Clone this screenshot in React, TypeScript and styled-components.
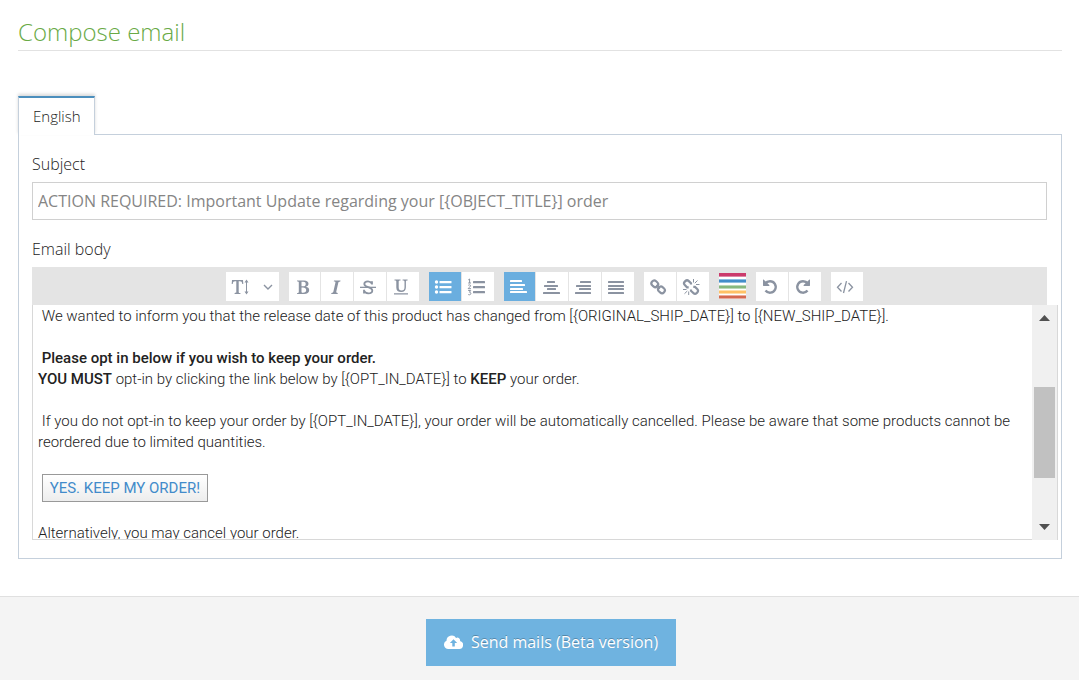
import React, { ReactNode } from "react";
import styled, { createGlobalStyle } from "styled-components";

const GlobalStyle = createGlobalStyle`
  *, *::before, *::after { box-sizing: border-box; }
  body {
    margin: 0;
    background: #fff;
    color: #393939;
    font: 300 16px/24px "Open Sans", sans-serif;
  }
  button, input { font: inherit; color: inherit; margin: 0; }
`;

const Page = styled.div`
  display: flex;
  flex-direction: column;
  min-height: 100vh;
`;

const Main = styled.main`
  padding: 14px 17px 37px 18px;
`;

const Title = styled.h1`
  margin: 0 0 45px;
  padding-bottom: 0;
  border-bottom: 1px solid #e2e2e2;
  color: #69aa46;
  font-size: 24px;
  font-weight: 300;
  line-height: 36px;
`;

const Tabs = styled.div`
  display: flex;
  position: relative;
  margin-bottom: -1px;
`;

const Tab = styled.button`
  height: 39px;
  padding: 0 13px 2px 14px;
  border: 1px solid #c5d0dc;
  border-top: 2px solid #4c8fbd;
  border-bottom: 0;
  background: #fff;
  box-shadow: 0 -2px 3px rgba(0, 0, 0, 0.15);
  color: #222;
  font-size: 15px;
`;

const Panel = styled.form`
  padding: 17px 14px 18px 13px;
  border: 1px solid #c5d0dc;
`;

const Label = styled.label`
  display: block;
  margin-bottom: 6px;
  color: #222;
`;

const SubjectInput = styled.input`
  display: block;
  width: 100%;
  height: 38px;
  margin-bottom: 17px;
  padding: 0 5px;
  border: 1px solid #d0d0d0;
  border-radius: 0;
  outline: 0;
  background: #fff;
  color: #858585;
  font-weight: 400;
`;

const Toolbar = styled.div`
  display: flex;
  justify-content: center;
  gap: 10px;
  height: 38px;
  padding: 5px 0 4px 9px;
  background: #e4e4e4;
`;

const Group = styled.div<{ $width: number }>`
  display: flex;
  gap: 1px;
  width: ${(p) => p.$width}px;
`;

const ToolButton = styled.button<{ $active?: boolean; $menu?: boolean }>`
  display: flex;
  flex: 1;
  align-items: center;
  justify-content: center;
  gap: 14px;
  padding: 0 ${(p) => (p.$menu ? 0 : 3)}px 0 0;
  border: 0;
  background: ${(p) => (p.$active ? "#6aaedf" : "#fff")};
  color: ${(p) => (p.$active ? "#fff" : "#8b93a1")};
`;

const ColorButton = styled.button`
  display: flex;
  width: 27px;
  padding: 1px 0 0;
  border: 0;
  background: transparent;
`;

const Editor = styled.div`
  display: flex;
  height: 235px;
  margin-right: -11px;
  border-right: 1px solid #d8d8d8;
  border-left: 1px solid #d8d8d8;
`;

const EditorText = styled.div`
  flex: 1;
  overflow: hidden;
  padding: 1px 5px 0;
  border-bottom: 1px solid #d8d8d8;
  outline: 0;
  color: #222;
  font: 300 15px/21px Roboto, sans-serif;

  p { margin: 0 0 21px; }
  b { font-weight: 500; }
`;

const KeepLink = styled.a`
  display: inline-block;
  height: 28px;
  padding: 0 7px;
  border: 1px solid #999;
  background: linear-gradient(#fff, #ededed);
  color: #428bca;
  font-weight: 400;
  line-height: 26px;
  text-decoration: none;
  vertical-align: top;
`;

const ScrollTrack = styled.div`
  display: flex;
  flex-direction: column;
  align-items: center;
  width: 25px;
  padding: 10px 0;
  background: #f0f0f0;
`;

const ScrollThumb = styled.div`
  width: 21px;
  height: 91px;
  margin: 66px 0 auto;
  background: #c1c1c1;
`;

const Footer = styled.footer`
  display: flex;
  flex: 1;
  align-items: flex-start;
  justify-content: center;
  padding: 22px 0 14px 23px;
  border-top: 1px solid #e0e0e0;
  background: #f4f4f4;
`;

const SendButton = styled.button`
  display: flex;
  align-items: center;
  gap: 8px;
  height: 47px;
  padding: 0 18px 2px;
  border: 0;
  background: #6fb3e0;
  color: #fff;
  font-size: 16px;
  font-weight: 400;
  text-shadow: 0 -1px 0 rgba(0, 0, 0, 0.25);
`;

type IconProps = { w?: number; h?: number; children: ReactNode };

const Icon = ({ w = 18, h = 18, children }: IconProps) => (
  <svg width={w} height={h} viewBox={`0 0 ${w} ${h}`} fill="currentColor" aria-hidden="true">
    {children}
  </svg>
);

const Bars = ({ rows, thick = 2 }: { rows: number[][]; thick?: number }) => (
  <Icon>
    {rows.map(([x, y, w]) => (
      <rect key={y} x={x} y={y} width={w} height={thick} rx={thick / 4} />
    ))}
  </Icon>
);

const stroke = { fill: "none", stroke: "currentColor" };

const SizeIcon = () => (
  <Icon w={18}>
    <path d="M1 2h11l.3 4h-1c-.3-2-.8-2.7-2.4-2.7H7.7V14c0 1 .4 1.1 1.8 1.2v.8h-6v-.8C5 15.100 5.300 15 5.300 14V3.300H4.100C2.500 3.300 2 4 1.700 6h-1z" />
    <path d="M15.500 1.500 17.500 4.500H16V13.500h1.500l-2 3-2-3H15V4.500h-1.500z" />
  </Icon>
);

const BoldIcon = () => (
  <Icon>
    <path
      fillRule="evenodd"
      d="M3 2.500h7c3 0 4.500 1.300 4.500 3.300 0 1.600-1 2.500-2.600 2.900 2 .4 3.300 1.400 3.300 3.300 0 2.500-2 4-5.200 4H3v-.8c1.500-.2 1.800-.4 1.800-1.400V4.700c0-1-.3-1.200-1.800-1.400zM7.500 3.700v4.500h1.700c1.700 0 2.500-.8 2.500-2.300s-.8-2.200-2.400-2.200zM7.500 9.400v4.300c0 .8.4 1.100 1.500 1.100 2 0 3.200-.9 3.200-2.700s-1.300-2.700-3.200-2.700z"
    />
  </Icon>
);

const ItalicIcon = () => (
  <Icon>
    <path d="M7 2.500h6.500l-.2.9c-1.500.2-1.800.4-2 1.300L9.300 13.600c-.2.900 0 1.200 1.500 1.300l-.2 1H4.200l.2-1c1.400-.2 1.800-.4 2-1.300L8.400 4.700c.2-.9 0-1.200-1.600-1.300z" />
  </Icon>
);

const StrikeIcon = () => (
  <Icon>
    <path
      {...stroke}
      strokeWidth="1.800"
      d="M13 6.500V3.200M12.800 5.500C12 4 10.800 3.300 9 3.300c-2.300 0-3.700 1-3.700 2.700 0 3.700 8 2.500 8 6.400 0 1.800-1.600 2.900-4 2.900-2.300 0-3.800-1.100-4.300-2.800M5 11.800v3.700"
    />
    <path d="M1 8.700h16v1.300H1z" />
  </Icon>
);

const UnderlineIcon = () => (
  <Icon>
    <path d="M2.500 1.500h6v.9c-1.500.1-1.800.3-1.800 1.200v5.700c0 2.200.9 3.300 2.900 3.300s2.900-1.100 2.900-3.300V3.600c0-.9-.4-1.100-1.900-1.200v-.9h5v.9c-1.400.1-1.700.4-1.700 1.200v5.700c0 3-1.500 4.700-4.700 4.700-3.300 0-4.900-1.600-4.900-4.600V3.600c0-.9-.3-1.100-1.800-1.200zM2 15.300h14v1.200H2z" />
  </Icon>
);

const BulletsIcon = () => (
  <Icon>
    {[3, 8, 13].map((y) => (
      <g key={y}>
        <circle cx="2.500" cy={y + 1} r="1.700" />
        <rect x="5.500" y={y} width="12" height="2.200" rx=".5" />
      </g>
    ))}
  </Icon>
);

const NumbersIcon = () => (
  <Icon>
    {[3, 8, 13].map((y) => (
      <rect key={y} x="6" y={y} width="12" height="2.200" rx=".5" />
    ))}
    <path
      {...stroke}
      d="M1.300 1.800 2.600 1v4M1.200 5h2.800M1.200 7.500c.5-1 2.500-.9 2.400.4C3.500 9 1.300 9.500 1.200 10.700H4M1.200 12.500h2.500l-1.300 1.700c2 0 1.900 2.600 0 2.600-.6 0-1-.2-1.300-.5"
    />
  </Icon>
);

const LinkIcon = () => (
  <Icon>
    <g {...stroke} strokeWidth="2.200" transform="rotate(42 9 9)">
      <rect x="1" y="6" width="7" height="5.600" rx="2.800" />
      <rect x="10" y="6" width="7" height="5.600" rx="2.800" />
      <path d="M6.500 8.800h5" strokeWidth="1.800" />
    </g>
  </Icon>
);

const UnlinkIcon = () => (
  <Icon>
    <g {...stroke} strokeWidth="2.200">
      <path d="M9 6.500V5.300L6.800 3.100a2.500 2.500 0 0 0-3.500 0l-.5.5a2.500 2.500 0 0 0 0 3.500L5 9.300h1.700M9 11.500v1.200l2.300 2.300a2.500 2.500 0 0 0 3.500 0l.4-.4a2.500 2.500 0 0 0 0-3.500L13 8.900h-1.700" />
      <path strokeWidth="1" d="M11.500 1v3.500M15.500 2.500l-2.700 2.700M17.500 6.500H14M1 11.500h3.500M5.300 13l-2.800 2.700M6.700 13.500V17" />
    </g>
  </Icon>
);

const TurnIcon = ({ flip }: { flip?: boolean }) => (
  <Icon>
    <g transform={flip ? "translate(18 0) scale(-1 1)" : undefined}>
      <path {...stroke} strokeWidth="2.400" d="M4 5.500C5.300 4 7 3.300 9 3.300a5.700 5.700 0 1 1-4.500 9.200" />
      <path d="M2 2v5.500c0 .3.200.5.500.5H8c.5 0 .7-.5.300-.9L2.800 1.700C2.500 1.400 2 1.500 2 2z" />
    </g>
  </Icon>
);

const CodeIcon = () => (
  <Icon>
    <path {...stroke} strokeWidth="1.300" d="m5.500 5-4 4.300 4 4.200M12.500 5l4 4.300-4 4.200M10.500 3.200 7.500 15" />
  </Icon>
);

const ChevronIcon = () => (
  <Icon w={10} h={8}>
    <path {...stroke} strokeWidth="1.400" d="m1 2 4 4 4-4" />
  </Icon>
);

const stripes: [string, string, number][] = [
  ["#cb3a6b", "#dd86a5", 0],
  ["#438dc9", "#8dbce0", 6],
  ["#87b87f", "#bcd8b8", 12],
  ["#ffc165", "#ffdfab", 17],
  ["#d5694f", "#e8ac9d", 22],
];

const StripesIcon = () => (
  <Icon w={27} h={26}>
    <rect width="27" height="26" fill="#fff" />
    {stripes.map(([main, soft, y]) => (
      <g key={y}>
        <rect y={y} width="27" height="4" fill={soft} />
        <rect y={y === 0 ? 0 : y + 1} width="27" height={y === 0 ? 3 : 2} fill={main} />
      </g>
    ))}
  </Icon>
);

const CloudUploadIcon = () => (
  <svg width="19" height="14" viewBox="0 0 19 14" fill="currentColor" aria-hidden="true">
    <path
      fillRule="evenodd"
      d="M4.300 14A4.300 4.300 0 0 1 2.500 5.800 5.200 5.200 0 0 1 12.100 3 2.700 2.700 0 0 1 16 6.100 4 4 0 0 1 15 14zM9.500 4.300 5.900 8H8.300v3.500h2.500V8h2.400z"
    />
  </svg>
);

const Arrow = ({ down }: { down?: boolean }) => (
  <Icon w={11} h={6}>
    <path fill="#505050" d={down ? "M0 0h11L5.500 6z" : "M0 6h11L5.500 0z"} />
  </Icon>
);

type ToolProps = { label: string; active?: boolean; menu?: boolean; children: ReactNode };

const Tool = ({ label, active, menu, children }: ToolProps) => (
  <ToolButton type="button" aria-label={label} $active={active} $menu={menu}>
    {children}
  </ToolButton>
);

export default function App() {
  return (
    <Page>
      <GlobalStyle />
      <Main>
        <Title>Compose email</Title>
        <Tabs role="tablist">
          <Tab type="button" role="tab" aria-selected="true">English</Tab>
        </Tabs>
        <Panel id="compose" onSubmit={(e) => e.preventDefault()}>
          <Label htmlFor="subject">Subject</Label>
          <SubjectInput
            id="subject"
            defaultValue="ACTION REQUIRED: Important Update regarding your [{OBJECT_TITLE}] order"
          />
          <Label id="body-label">Email body</Label>
          <Toolbar role="toolbar">
            <Group $width={53}>
              <Tool label="Font size" menu><SizeIcon /><ChevronIcon /></Tool>
            </Group>
            <Group $width={130}>
              <Tool label="Bold"><BoldIcon /></Tool>
              <Tool label="Italic"><ItalicIcon /></Tool>
              <Tool label="Strikethrough"><StrikeIcon /></Tool>
              <Tool label="Underline"><UnderlineIcon /></Tool>
            </Group>
            <Group $width={65}>
              <Tool label="Bullet list" active><BulletsIcon /></Tool>
              <Tool label="Number list"><NumbersIcon /></Tool>
            </Group>
            <Group $width={130}>
              <Tool label="Align left" active>
                <Bars rows={[[1, 2, 12], [1, 6, 15], [1, 10, 13], [1, 13, 17]]} />
              </Tool>
              <Tool label="Center">
                <Bars rows={[[5, 3, 8], [2, 7, 14], [5, 10, 9], [1, 14, 17]]} />
              </Tool>
              <Tool label="Align right">
                <Bars rows={[[6, 3, 11], [2, 7, 15], [5, 10, 12], [1, 14, 16]]} />
              </Tool>
              <Tool label="Justify">
                <Bars rows={[[1, 3, 16], [1, 7, 16], [1, 10, 16], [1, 14, 16]]} />
              </Tool>
            </Group>
            <Group $width={65}>
              <Tool label="Insert link"><LinkIcon /></Tool>
              <Tool label="Remove link"><UnlinkIcon /></Tool>
            </Group>
            <ColorButton type="button" aria-label="Text color"><StripesIcon /></ColorButton>
            <Group $width={65}>
              <Tool label="Undo"><TurnIcon /></Tool>
              <Tool label="Redo"><TurnIcon flip /></Tool>
            </Group>
            <Group $width={32}>
              <Tool label="View source"><CodeIcon /></Tool>
            </Group>
          </Toolbar>
          <Editor>
            <EditorText
              role="textbox"
              aria-multiline="true"
              aria-labelledby="body-label"
              contentEditable
              suppressContentEditableWarning
            >
              <p>
                &nbsp;We wanted to inform you that the release date of this product has changed from
                [&#123;ORIGINAL_SHIP_DATE&#125;] to [&#123;NEW_SHIP_DATE&#125;].
              </p>
              <p>
                &nbsp;<b>Please opt in below if you wish to keep your order.</b>
                <br />
                <b>YOU MUST</b> opt-in by clicking the link below by [&#123;OPT_IN_DATE&#125;] to <b>KEEP</b> your
                order.
              </p>
              <p>
                &nbsp;If you do not opt-in to keep your order by [&#123;OPT_IN_DATE&#125;], your order will be
                automatically cancelled. Please be aware that some products cannot be reordered due to limited
                quantities.
              </p>
              <p>
                &nbsp;<KeepLink href="#keep">YES. KEEP MY ORDER!</KeepLink>
              </p>
              <p>Alternatively, you may cancel your order.</p>
            </EditorText>
            <ScrollTrack aria-hidden="true">
              <Arrow />
              <ScrollThumb />
              <Arrow down />
            </ScrollTrack>
          </Editor>
        </Panel>
      </Main>
      <Footer>
        <SendButton type="submit" form="compose">
          <CloudUploadIcon />
          Send mails (Beta version)
        </SendButton>
      </Footer>
    </Page>
  );
}
